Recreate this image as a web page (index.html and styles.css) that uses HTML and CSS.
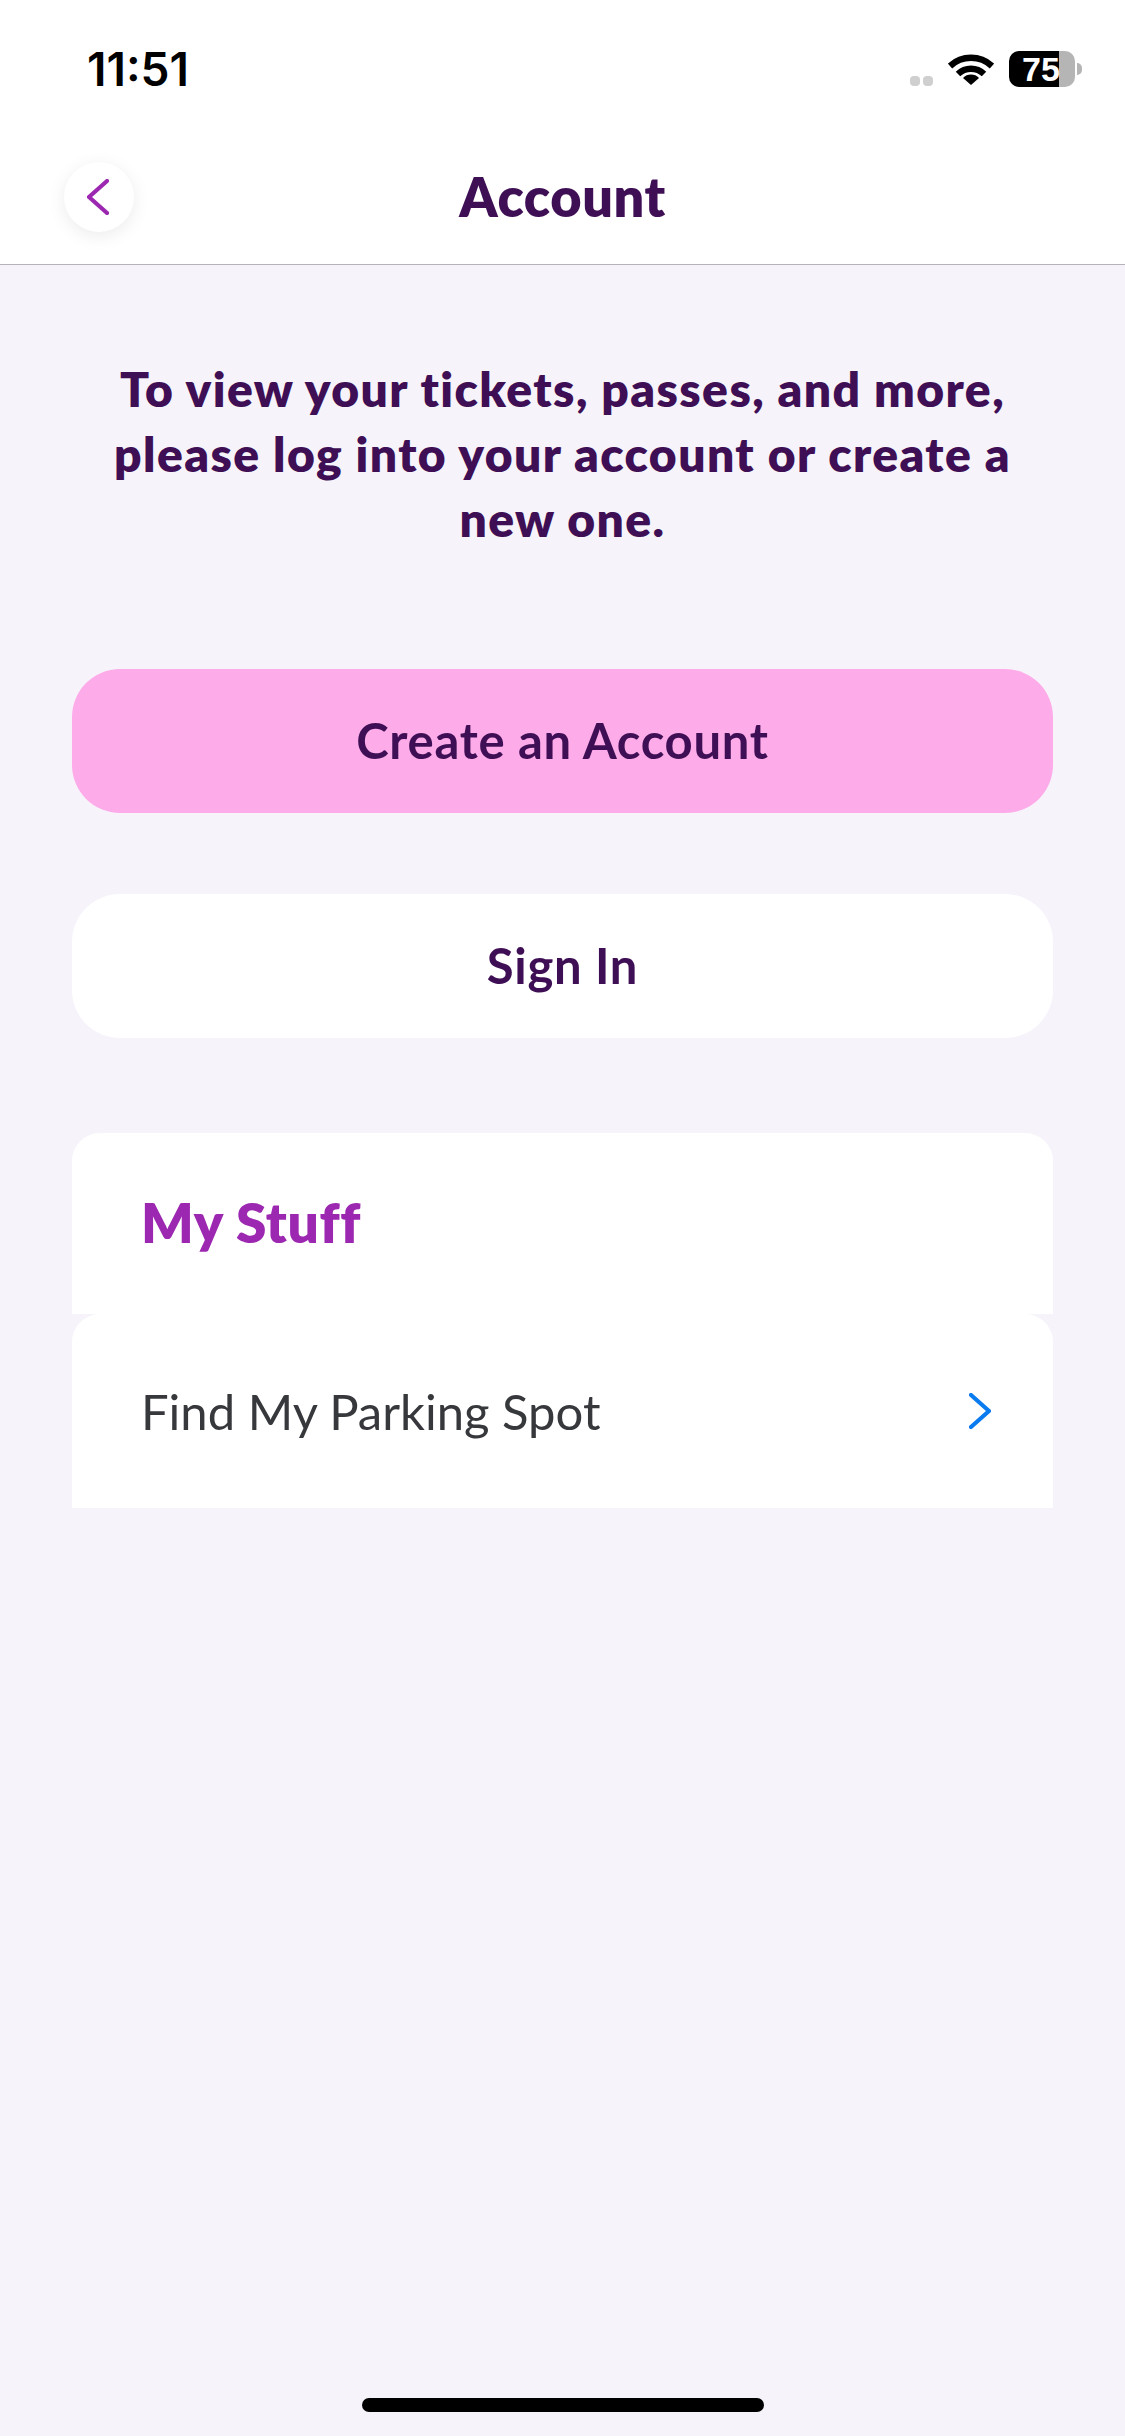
FILE: index.html
```html
<!DOCTYPE html>
<html lang="en">
<head>
    <meta charset="UTF-8">
    <meta name="viewport" content="width=device-width, initial-scale=1.0">
    <title>Account</title>
    <link rel="stylesheet" href="styles.css">
</head>
<body>
    <div class="top">
        <div class="status-bar">
            <span class="time">11:51</span>
            <div class="status-icons">
                <span class="dots"><i></i><i></i></span>
                <svg class="wifi" width="46" height="32" viewBox="0 0 46 32">
                    <path d="M2 13 A31 31 0 0 1 44 13" fill="none" stroke="#000" stroke-width="6.5"/>
                    <path d="M10 21 A19 19 0 0 1 36 21" fill="none" stroke="#000" stroke-width="6.5"/>
                    <path d="M15 25 A11 11 0 0 1 31 25 L23 32 Z" fill="#000"/>
                </svg>
                <div class="battery">
                    <div class="battery-body">
                        <span class="battery-level">75</span>
                    </div>
                    <span class="battery-cap"></span>
                </div>
            </div>
        </div>
        <div class="nav-bar">
            <button class="back-btn">
                <svg width="22" height="36" viewBox="0 0 22 36">
                    <path d="M20 2 L2 18 L20 34" fill="none" stroke="#9c27b0" stroke-width="4.2" stroke-linecap="round" stroke-linejoin="round"/>
                </svg>
            </button>
            <h1 class="nav-title">Account</h1>
        </div>
    </div>

    <div class="content">
        <p class="intro">To view your tickets, passes, and more,<br>please log into your account or create a<br>new one.</p>
        <button class="btn btn-pink">Create an Account</button>
        <button class="btn btn-white">Sign In</button>

        <div class="stuff">
            <div class="stuff-head">My Stuff</div>
            <div class="stuff-row">
                <span>Find My Parking Spot</span>
                <svg width="22" height="36" viewBox="0 0 22 36">
                    <path d="M2 2 L20 18 L2 34" fill="none" stroke="#0a7cf0" stroke-width="4.2" stroke-linecap="round" stroke-linejoin="round"/>
                </svg>
            </div>
        </div>
    </div>

    <div class="home-indicator"></div>
</body>
</html>
```

FILE: styles.css
```css
html, body {
    height: 100%;
}
body {
    font-family: "Lato", "Noto Sans", sans-serif;
    background-color: #f6f4fa;
    margin: 0;
    height: 2436px;
    position: relative;
    overflow: hidden;
}
.top {
    background: white;
    height: 264px;
    border-bottom: 1px solid #b5b2bb;
}
.status-bar {
    height: 132px;
    padding: 6px 43px 0 87px;
    display: flex;
    justify-content: space-between;
    align-items: center;
    box-sizing: border-box;
}
.time {
    font-family: "Inter", sans-serif;
    font-size: 46px;
    font-weight: 600;
    color: #000;
}
.status-icons {
    display: flex;
    align-items: center;
}
.dots {
    display: flex;
    gap: 3px;
    margin: 23px 15px 0 0;
}
.dots i {
    width: 10px;
    height: 10px;
    border-radius: 4px;
    background: #cfcfcf;
}
.wifi {
    margin-right: 15px;
}
.battery {
    display: flex;
    align-items: center;
    gap: 2px;
}
.battery-body {
    width: 66px;
    height: 36px;
    border-radius: 10px;
    background: linear-gradient(to right, #000 50px, #b5b5b5 50px);
}
.battery-level {
    display: block;
    font-family: "Liberation Sans", sans-serif;
    font-size: 34px;
    font-weight: 700;
    line-height: 36px;
    color: white;
    padding-left: 13px;
}
.battery-cap {
    width: 5px;
    height: 12px;
    background: #b5b5b5;
    border-radius: 0 5px 5px 0;
}
.nav-bar {
    height: 132px;
    position: relative;
    display: flex;
    align-items: flex-start;
    justify-content: center;
}
.nav-title {
    font-size: 54px;
    font-weight: 800;
    letter-spacing: 0.6px;
    color: #3f0f55;
    margin: 32px 0 0;
}
.back-btn {
    position: absolute;
    left: 64px;
    top: 30px;
    width: 70px;
    height: 70px;
    border: none;
    border-radius: 50%;
    background: white;
    box-shadow: 0px 4px 18px rgba(0, 0, 0, 0.08);
    padding: 0 2px 0 0;
    display: flex;
    align-items: center;
    justify-content: center;
}
.content {
    padding: 91px 72px 0 72px;
}
.intro {
    font-size: 48px;
    font-weight: 800;
    letter-spacing: 1.4px;
    line-height: 65px;
    color: #3f0f55;
    text-align: center;
    margin: 0 0 118px;
}
.btn {
    display: block;
    width: 100%;
    height: 144px;
    padding: 0 0 2px;
    border: none;
    border-radius: 48px;
    font-family: inherit;
    font-size: 49px;
    font-weight: 700;
    letter-spacing: 0.7px;
    color: #3f0f55;
}
.btn-pink {
    background-color: #fdabe9;
    margin-bottom: 81px;
}
.btn-white {
    background-color: white;
    margin-bottom: 95px;
}
.stuff-head {
    background: white;
    height: 181px;
    box-sizing: border-box;
    border-radius: 28px 28px 0 0;
    padding: 56px 69px 0;
    font-size: 55px;
    font-weight: 800;
    letter-spacing: 0.6px;
    color: #9c27b0;
}
.stuff-row {
    background: white;
    height: 194px;
    box-sizing: border-box;
    border-radius: 28px 28px 0 0;
    padding: 0 62px 0 69px;
    display: flex;
    align-items: center;
    justify-content: space-between;
    font-size: 49px;
    color: #36383c;
}
.home-indicator {
    position: absolute;
    left: 362px;
    top: 2398px;
    width: 402px;
    height: 14px;
    border-radius: 7px;
    background: #000;
}
```
